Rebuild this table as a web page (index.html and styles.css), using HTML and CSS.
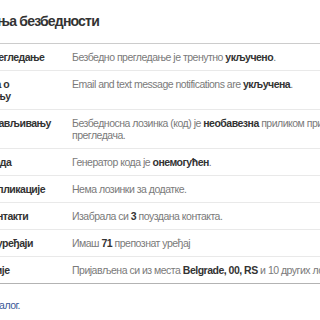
FILE: index.html
```html
<!DOCTYPE html>
<html lang="sr">
<head>
  <meta charset="UTF-8" />
  <title>Подешавања безбедности</title>
  <link rel="stylesheet" href="styles.css">
</head>
<body>

  <div class="settings">
    <h2 class="settings-title">Подешавања безбедности</h2>

    <div class="settings-list">
      <div class="row">
        <div class="label">Безбедно прегледање</div>
        <div class="value">Безбедно прегледање је тренутно <b>укључено</b>.</div>
      </div>
      <div class="row">
        <div class="label">Обавештења о<br>пријављивању</div>
        <div class="value">Email and text message notifications are <b>укључена</b>.</div>
      </div>
      <div class="row">
        <div class="label">Код при пријављивању</div>
        <div class="value">Безбедносна лозинка (код) је <b>необавезна</b> приликом пријављивања са непознатих<br>прегледача.</div>
      </div>
      <div class="row">
        <div class="label">Генератор кода</div>
        <div class="value">Генератор кода је <b>онемогућен</b>.</div>
      </div>
      <div class="row">
        <div class="label">Лозинке за апликације</div>
        <div class="value">Нема лозинки за додатке.</div>
      </div>
      <div class="row">
        <div class="label">Поуздани контакти</div>
        <div class="value">Изабрала си <b>3</b> поуздана контакта.</div>
      </div>
      <div class="row">
        <div class="label">Препознати уређаји</div>
        <div class="value">Имаш <b>71</b> препознат уређај</div>
      </div>
      <div class="row">
        <div class="label">Активне сесије</div>
        <div class="value">Пријављена си из места <b>Belgrade, 00, RS</b> и 10 других локација.</div>
      </div>
    </div>

    <p class="footer-link"><a href="#">Обезбедите налог.</a></p>
  </div>

</body>
</html>
```

FILE: styles.css
```css
html, body {
  overflow: hidden;
}

body {
  margin: 0;
  background: #fff;
  font-family: 'Liberation Sans', Arial, sans-serif;
  font-size: 10.5px;
  letter-spacing: -0.5px;
  color: #333;
}

.settings {
  margin-left: -62px;
  width: 600px;
}

.settings-title {
  margin: 0;
  padding: 12px 0 12px;
  text-indent: -5px;
  font-size: 14px;
  line-height: 19px;
  letter-spacing: -0.8px;
  font-weight: bold;
  color: #333;
  border-bottom: 1px solid #ccc;
}

.row {
  display: grid;
  grid-template-columns: 126px 1fr;
  column-gap: 8px;
  padding: 7px 0;
  line-height: 12px;
  border-bottom: 1px solid #e9e9e9;
}

.row:last-child {
  border-bottom-color: #b3b3b3;
}

.label {
  font-weight: bold;
  color: #333;
  white-space: nowrap;
}

.value {
  color: #7a7a7a;
  white-space: nowrap;
}

.value b {
  color: #333;
}

.footer-link {
  margin: 15px 0 0;
  line-height: 12px;
}

.footer-link a {
  color: #3b5998;
  text-decoration: none;
}
```
